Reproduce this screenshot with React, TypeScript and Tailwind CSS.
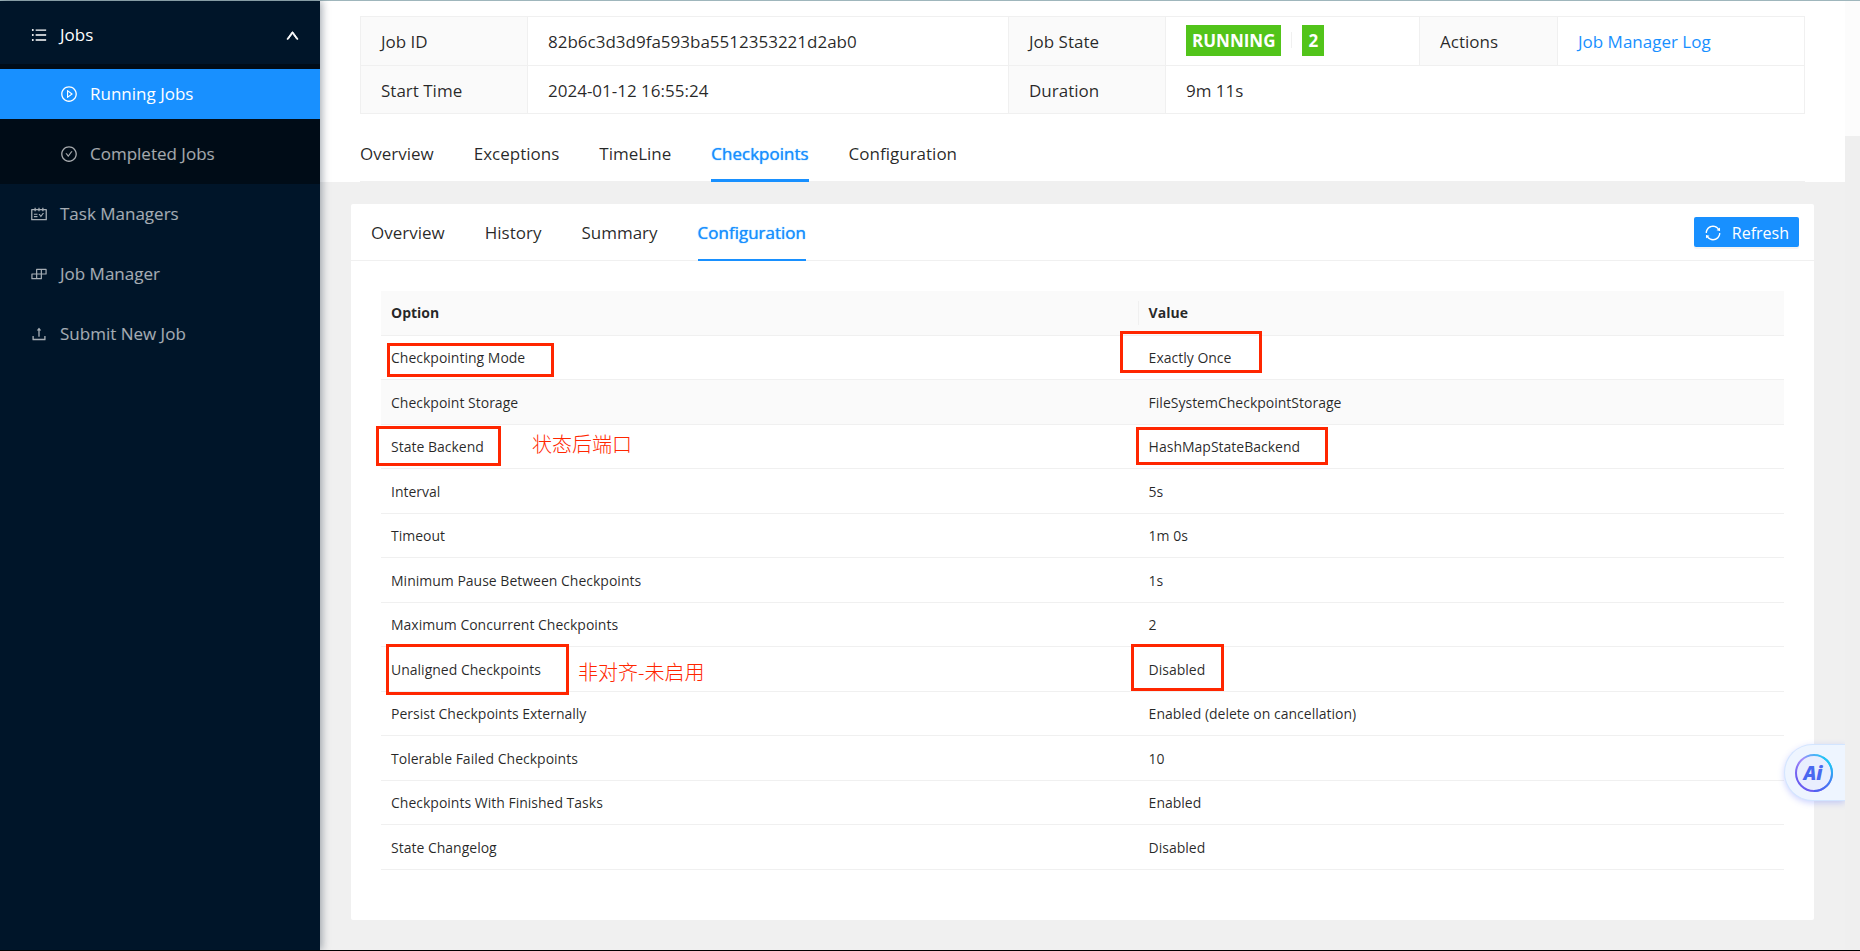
import { useState } from 'react'
import type { ReactNode } from 'react'
import {
  AiOutlineBars, AiOutlineBuild, AiOutlineCheckCircle, AiOutlinePlayCircle,
  AiOutlineSchedule, AiOutlineSync, AiOutlineUp, AiOutlineUpload,
} from 'react-icons/ai'
import clsx from 'clsx'

type Note = { box: string; text?: string; textPos?: string }
type Row = { option: string; value: string; optionNote?: Note; valueNote?: Note }

const ROWS: Row[] = [
  {
    option: 'Checkpointing Mode', value: 'Exactly Once',
    optionNote: { box: 'left-[6px] top-[7px] w-[167px] h-[34px]' },
    valueNote: { box: '-left-[19px] -top-[5px] w-[142px] h-[42px]' },
  },
  { option: 'Checkpoint Storage', value: 'FileSystemCheckpointStorage' },
  {
    option: 'State Backend', value: 'HashMapStateBackend',
    optionNote: { box: '-left-[5px] top-px w-[125px] h-[40px]', text: '状态后端口', textPos: 'left-[151px] top-[5px]' },
    valueNote: { box: '-left-[3px] top-[2px] w-[192px] h-[38px]' },
  },
  { option: 'Interval', value: '5s' },
  { option: 'Timeout', value: '1m 0s' },
  { option: 'Minimum Pause Between Checkpoints', value: '1s' },
  { option: 'Maximum Concurrent Checkpoints', value: '2' },
  {
    option: 'Unaligned Checkpoints', value: 'Disabled',
    optionNote: { box: 'left-[5px] -top-[3px] w-[183px] h-[51px]', text: '非对齐-未启用', textPos: 'left-[197px] top-[11px]' },
    valueNote: { box: '-left-[8px] -top-[3px] w-[93px] h-[47px]' },
  },
  { option: 'Persist Checkpoints Externally', value: 'Enabled (delete on cancellation)' },
  { option: 'Tolerable Failed Checkpoints', value: '10' },
  { option: 'Checkpoints With Finished Tasks', value: 'Enabled' },
  { option: 'State Changelog', value: 'Disabled' },
]

const JOB_TABS = ['Overview', 'Exceptions', 'TimeLine', 'Checkpoints', 'Configuration']
const CHECKPOINT_TABS = ['Overview', 'History', 'Summary', 'Configuration']

function MenuItem({ icon, label, sub, active }: { icon: ReactNode; label: string; sub?: boolean; active?: boolean }) {
  return (
    <a href="#" className={clsx(
      'flex h-[50px] items-center my-[5px] gap-3 hover:text-white',
      sub ? 'pl-[60px]' : 'pl-[30px]',
      active ? 'bg-[#1890ff] text-white' : 'text-white/65',
    )}>
      {icon}{label}
    </a>
  )
}

function Sidebar() {
  return (
    <aside className="relative z-10 w-80 shrink-0 bg-[#001529] shadow-[2px_0_8px_rgba(0,21,41,0.35)]">
      <button type="button" className="mt-[9px] mb-1 flex h-[50px] w-full items-center gap-3 pl-[30px] pr-5 text-white">
        <AiOutlineBars size={18} />
        <span className="flex-1 text-left">Jobs</span>
        <AiOutlineUp size={15} strokeWidth={60} />
      </button>
      <div className="flex flex-col bg-[#000c17]">
        <MenuItem sub active icon={<AiOutlinePlayCircle size={18} />} label="Running Jobs" />
        <MenuItem sub icon={<AiOutlineCheckCircle size={18} />} label="Completed Jobs" />
      </div>
      <nav className="flex flex-col">
        <MenuItem icon={<AiOutlineSchedule size={18} />} label="Task Managers" />
        <MenuItem icon={<AiOutlineBuild size={18} />} label="Job Manager" />
        <MenuItem icon={<AiOutlineUpload size={18} />} label="Submit New Job" />
      </nav>
    </aside>
  )
}

function Tabs({ items, active, onChange, tabClass }: { items: string[]; active: string; onChange: (t: string) => void; tabClass: string }) {
  return (
    <div role="tablist" className="flex gap-10">
      {items.map(t => (
        <button key={t} type="button" role="tab" aria-selected={t === active} onClick={() => onChange(t)}
          className={clsx('-mb-px font-medium', tabClass, t === active ? 'border-[#1890ff] text-[#1890ff] [text-shadow:0_0_1px_currentColor]' : 'border-transparent')}>
          {t}
        </button>
      ))}
    </div>
  )
}

function JobHeader() {
  const [tab, setTab] = useState('Checkpoints')
  const label = 'bg-[#fafafa] border border-[#f0f0f0] px-5 pt-[2px] text-left font-normal'
  const cell = 'border border-[#f0f0f0] px-5 pt-[2px]'
  return (
    <header className="bg-white px-10 pt-[15px]">
      <table className="w-full table-fixed border-collapse">
        <colgroup>
          <col className="w-[167px]" />
          <col className="w-[481px]" />
          <col className="w-[157px]" />
          <col className="w-[254px]" />
          <col className="w-[138px]" />
          <col />
        </colgroup>
        <tbody>
          <tr className="h-[49px]">
            <th scope="row" className={label}>Job ID</th>
            <td className={cell}>82b6c3d3d9fa593ba5512353221d2ab0</td>
            <th scope="row" className={label}>Job State</th>
            <td className="border border-[#f0f0f0] px-5 pb-[2px]">
              <div className="flex items-center font-bold text-white">
                <span className="bg-[#52c41a] px-[6px] leading-[31px]">RUNNING</span>
                <span className="mx-[10px] h-4 w-px bg-[#f0f0f0]" />
                <span className="bg-[#52c41a] px-[6px] leading-[31px]">2</span>
              </div>
            </td>
            <th scope="row" className={label}>Actions</th>
            <td className={cell}><a href="#" className="text-[#1890ff]">Job Manager Log</a></td>
          </tr>
          <tr className="h-[48px]">
            <th scope="row" className={label}>Start Time</th>
            <td className={cell}>2024-01-12 16:55:24</td>
            <th scope="row" className={label}>Duration</th>
            <td className={cell} colSpan={3}>9m 11s</td>
          </tr>
        </tbody>
      </table>
      <div className="mt-[13px] border-b border-[#f0f0f0]">
        <Tabs items={JOB_TABS} active={tab} onChange={setTab} tabClass="h-[55px] border-b-[3px] pt-px" />
      </div>
    </header>
  )
}

function NoteMark({ note }: { note?: Note }) {
  if (!note) return null
  return (
    <>
      <span className={clsx('absolute z-10 border-[3px] border-[#ff2600]', note.box)} />
      {note.text && (
        <span className={clsx('absolute whitespace-nowrap text-xl leading-[30px] font-light text-[#ff2600]', note.textPos)}>{note.text}</span>
      )}
    </>
  )
}

function ConfigTable() {
  return (
    <table className="w-full table-fixed border-collapse text-sm">
      <thead>
        <tr className="h-[44px] border-b border-[#f0f0f0] bg-[#fafafa] text-left">
          <th className="w-[54%] p-0 font-bold">
            <div className="flex h-6 items-center border-r border-[#f0f0f0] pl-[10px]">Option</div>
          </th>
          <th className="px-[10px] font-bold">Value</th>
        </tr>
      </thead>
      <tbody>
        {ROWS.map((r, i) => (
          <tr key={r.option} className={clsx('h-[45px] border-b border-[#f0f0f0] odd:h-[44px]', i === 1 && 'bg-[#fafafa]')}>
            <td className="relative px-[10px] pt-[2px]">{r.option}<NoteMark note={r.optionNote} /></td>
            <td className="relative px-[10px] pt-[2px]">{r.value}<NoteMark note={r.valueNote} /></td>
          </tr>
        ))}
      </tbody>
    </table>
  )
}

function CheckpointsCard() {
  const [tab, setTab] = useState('Configuration')
  return (
    <section className="mx-[31px] mt-[22px] mb-[30px] flex-1 rounded-xs bg-white">
      <div className="flex items-start justify-between border-b border-[#f0f0f0] pl-5 pr-[15px]">
        <Tabs items={CHECKPOINT_TABS} active={tab} onChange={setTab} tabClass="h-[57px] border-b-2 pt-[3px]" />
        <button type="button" className="mt-[13px] flex h-[30px] items-center gap-[10px] rounded-xs bg-[#1890ff] px-[10px] pt-px text-base text-white shadow-[0_2px_0_rgba(0,0,0,0.045)]">
          <AiOutlineSync size={18} />Refresh
        </button>
      </div>
      <div className="px-[30px] pt-[30px] pb-[48px]">
        <ConfigTable />
      </div>
    </section>
  )
}

function AssistantButton() {
  return (
    <button type="button" aria-label="AI assistant"
      className="absolute right-[15px] top-[743px] z-20 flex h-[57px] w-[61px] items-center rounded-l-full border border-r-0 border-[#d3e5ff] bg-[#eef5ff] pl-[9px] shadow-[0_2px_6px_rgba(90,110,255,0.3)] [clip-path:inset(-10px_0_-10px_-10px)]">
      <svg width="40" height="40" viewBox="0 0 40 40">
        <defs>
          <linearGradient id="ring" x1="0.8" y1="0.1" x2="0.2" y2="0.8">
            <stop offset="0" stopColor="#2bc0f5" />
            <stop offset="0.45" stopColor="#a78bfa" />
            <stop offset="1" stopColor="#6a5cf0" />
          </linearGradient>
          <linearGradient id="ringRight" x1="0" y1="0" x2="0" y2="1">
            <stop offset="0.2" stopColor="#22c3f5" />
            <stop offset="1" stopColor="#4d62f0" />
          </linearGradient>
        </defs>
        <circle cx="20" cy="20" r="18" fill="#e9eefe" stroke="url(#ring)" strokeWidth="2" />
        <path d="M29 4.4A18 18 0 0 1 20 38" fill="none" stroke="url(#ringRight)" strokeWidth="2" />
        <text x="19" y="27" textAnchor="middle" fill="#4a68f0"
          className="font-['Open_Sans'] text-[19px] font-extrabold italic">Ai</text>
      </svg>
    </button>
  )
}

export default function App() {
  return (
    <div className="relative flex min-h-screen flex-col border-t border-b border-t-[#9fb6bc] border-b-black bg-[#f0f0f0] font-['Open_Sans','Noto_Sans_CJK_SC',sans-serif] text-[17px] text-black/85">
      <div className="flex flex-1">
        <Sidebar />
        <main className="flex min-w-0 flex-1 flex-col">
          <JobHeader />
          <CheckpointsCard />
        </main>
        <div className="w-[15px] shrink-0 bg-[#efefef]">
          <div className="h-[135px] bg-[#fcfcfc]" />
        </div>
      </div>
      <AssistantButton />
    </div>
  )
}
